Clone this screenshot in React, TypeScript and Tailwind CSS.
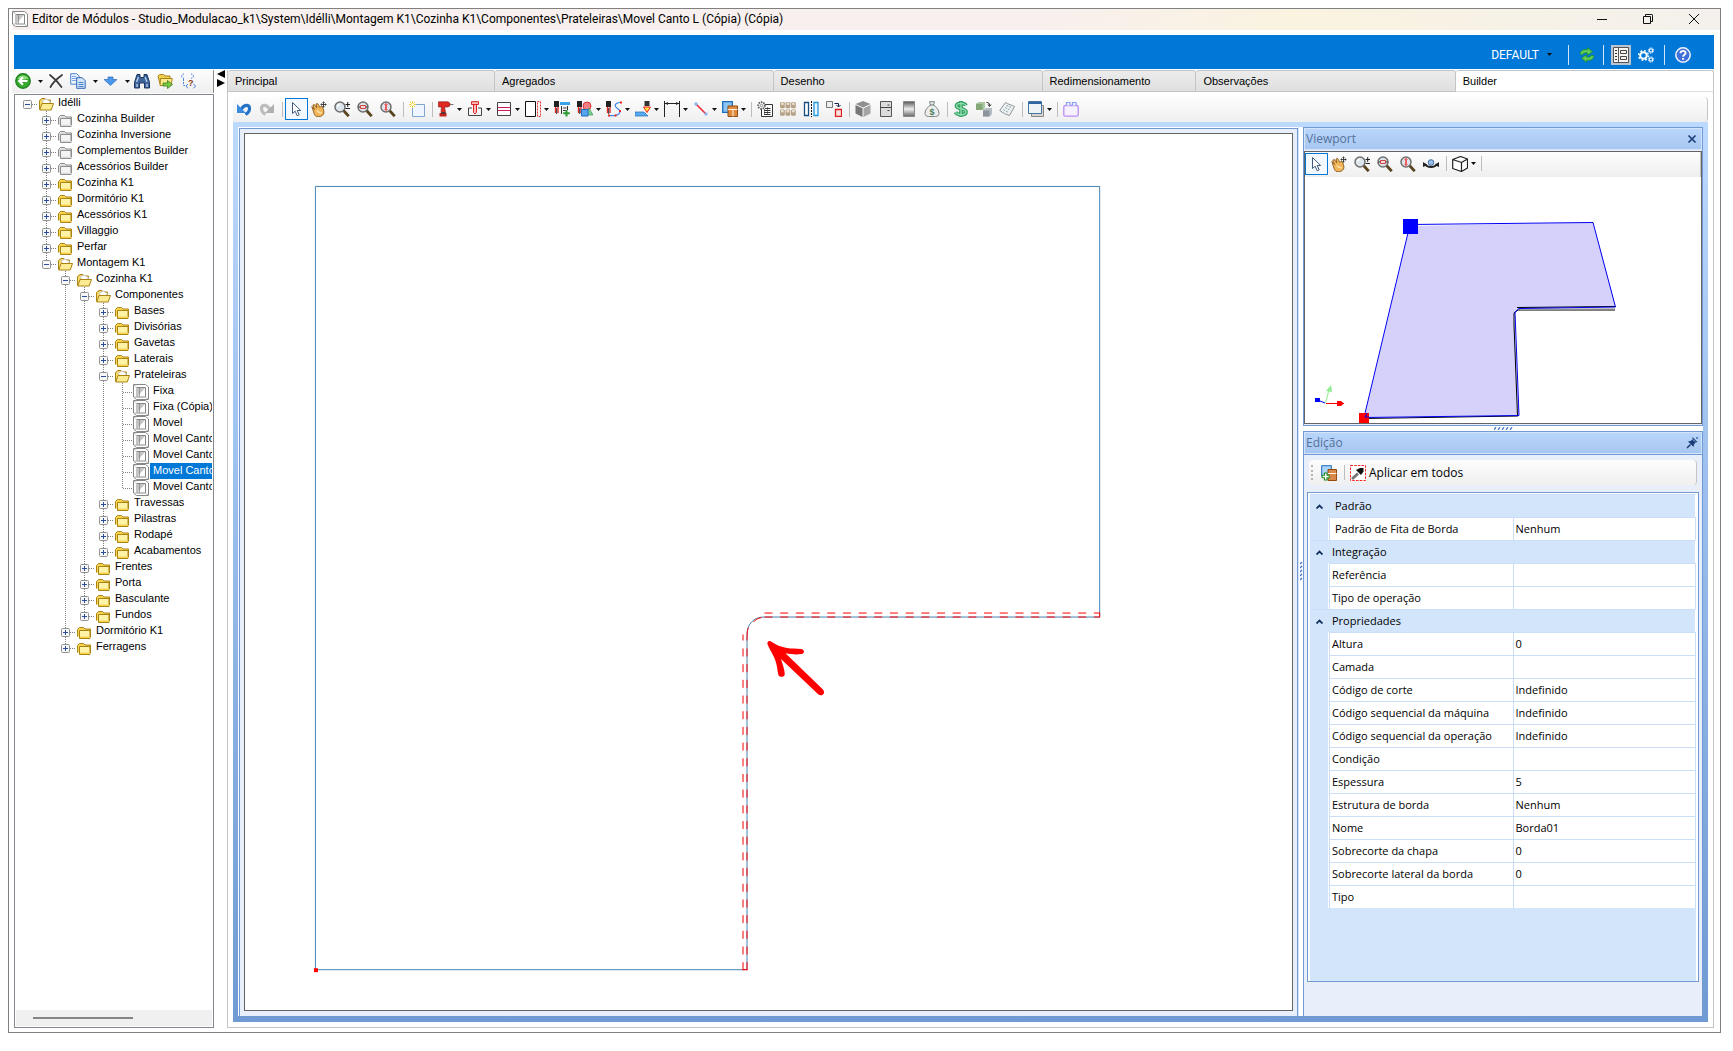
import React from "react";

type IconProps = { children: React.ReactNode; size?: string; box?: string };

function Icon({ children, size = "size-4", box = "0 0 16 16" }: IconProps) {
  return (
    <svg viewBox={box} className={`${size} shrink-0`} fill="none" aria-hidden="true">
      {children}
    </svg>
  );
}

/* ---------- toolbar icons ---------- */

const Undo = () => (
  <Icon>
    <path d="M5 8.500C8 3.500 13 3 13.500 7c.3 2.800-1.500 5-4 6.500" stroke="#2672c8" strokeWidth="3.200" />
    <path d="M1 3v9h9z" fill="#3a8be0" />
  </Icon>
);
const Redo = () => (
  <Icon>
    <path d="M11 8.500C8 3.500 3 3 2.500 7c-.3 2.800 1.500 5 4 6.500" stroke="#bdbdbd" strokeWidth="3.200" />
    <path d="M15 3v9H6z" fill="#b0b0b0" />
  </Icon>
);
const Cursor = () => (
  <Icon>
    <path d="M4.500 1.500v11l2.700-2.300 2 4.600 2-.9-2-4.400h3.500z" fill="#fff" stroke="#44597a" />
  </Icon>
);
const Hand = () => (
  <Icon>
    <path d="M.8 5.500 3.500 8.500 1.800 4.200 3.300 3.500l2.500 3.300L5 3l1.700-.4L9 6.500l1-1.300 1.700.8L13 11c0 3-2.500 4.700-5.500 4.700-2.500 0-3.800-1.200-4.300-3z" fill="#f1b65a" stroke="#8a5a1c" strokeWidth=".9" />
    <path d="M6 9.500c1.500 2 3 2.500 4.500 2" stroke="#fbe2ae" strokeWidth="1.500" />
    <path d="M12.500.5v6M9.500 3.500h6M11.500 1.500h2M11.500 5.500h2M10.500 2.500v2M14.500 2.500v2" stroke="#333" strokeWidth=".9" />
  </Icon>
);
function Lens({ children }: { children?: React.ReactNode }) {
  return (
    <Icon>
      <path d="m9.500 9.500 5.200 5.700" stroke="#5a4420" strokeWidth="2.800" />
      <circle cx="6" cy="6" r="5" fill="#dde5ec" stroke="#6e6e6e" strokeWidth="1.500" />
      {children}
    </Icon>
  );
}
const Zoom = () => (
  <Lens>
    <path d="M11.500 3.500h4.500M13.700 1v5M11.500 7.500h4.500" stroke="#222" />
    <path d="M3.500 5.500a2.500 2.500 0 0 1 2-2" stroke="#fff" strokeWidth="1.500" />
  </Lens>
);
const ZoomWindow = () => (
  <Lens>
    <path d="M3.500 4.500h5v3h-5z" stroke="#c44" fill="#f4dada" />
    <path d="M1.500 6h1.500M9 6h1.500" stroke="#222" />
  </Lens>
);
const ZoomFit = () => (
  <Lens>
    <path d="M6 3v6" stroke="#e33" strokeWidth="1.500" />
    <path d="M4 4 6 1.800 8 4zM4 8l2 2.200L8 8z" fill="#ef5a5a" />
  </Lens>
);
const NewSheet = () => (
  <Icon>
    <path d="M3.500 3.500h12v12h-12z" fill="#eef6ff" stroke="#7fa6cf" />
    <path d="M3.500 0v7M0 3.500h7M1 1l5 5M6 1 1 6" stroke="#f2cf3a" />
    <circle cx="3.500" cy="3.500" r="1.300" fill="#fff" />
  </Icon>
);
const Drill = () => (
  <Icon>
    <path d="M.5.800h9.500L12 2.300v2.400L10 6H6.500l1 5.500H3L3.500 6h-3z" fill="#e02a20" stroke="#7c1511" strokeWidth=".6" />
    <path d="M12 3.500h3.500" stroke="#777" />
    <path d="M1.500 12h7v3.500h-7z" fill="#c4241c" />
    <path d="M3.500 12h4" stroke="#333" strokeWidth="1.500" />
  </Icon>
);
const Dowel = () => (
  <Icon>
    <path d="M5 7H1.500v7.500h13V7H11" stroke="#444" />
    <path d="M6.500 3.500h3v8L8 13l-1.500-1.500zM4.500 .7h7v2.800h-7z" fill="#fbb" stroke="#dc2222" />
  </Icon>
);
const Shelf = () => (
  <Icon>
    <path d="M1.500 1.500h13v13h-13z" fill="#fff" stroke="#444" />
    <path d="M2 6.500h12M2 9.500h12" stroke="#d6185c" />
  </Icon>
);
const EdgeBand = () => (
  <Icon>
    <path d="M.5.500h10v15H.5z" fill="#fff" stroke="#111" />
    <path d="M12.500.5h3v15h-3z" stroke="#e33" strokeDasharray="2 1" />
  </Icon>
);
const Mill = () => (
  <>
    <path d="M0 0h5v6H0z" fill="#222" />
    <path d="M1.500 6v6M4 6v6" stroke="#e22" strokeWidth="1.300" />
    <path d="M2.700 7v6" stroke="#333" />
  </>
);
const MillAdd = () => (
  <Icon>
    <Mill />
    <path d="M6 1h10v3H6z" fill="#3aa3e8" />
    <path d="M7.500 5v8M13.500 5v4M9 7h3.500M9 9.500h3" stroke="#333" />
    <path d="M12.500 9v6.500M9.200 12.300h6.600" stroke="#2a9b2f" strokeWidth="2" />
  </Icon>
);
const MillShape = () => (
  <Icon>
    <Mill />
    <circle cx="10" cy="5" r="4" fill="#f07f86" stroke="#d33" />
    <path d="m12 7 4 7H9z" fill="#7fcf98" stroke="#3a9b57" strokeWidth=".7" />
    <path d="M4.500 8.500H11V15H4.500z" fill="#58a6ef" stroke="#1f6cc0" />
  </Icon>
);
const MillPath = () => (
  <Icon>
    <Mill />
    <path d="M14.500 1.500c-4 0-6 2-5 4s4.500 3 4.500 5-3 4-5 4-5 .5-6 0" stroke="#3a86e6" strokeWidth="1.200" />
    <path d="M14 .5h2v2h-2zM13 9h2v2h-2zM2 13.500h2v2H2zM8.500 13.500h2v2h-2z" fill="#e22" />
  </Icon>
);
const Chamfer = () => (
  <Icon>
    <path d="M9.500 0h5v5h-5z" fill="#333" />
    <path d="M8.500 6h7L12 11.500z" fill="#ffe23d" stroke="#e22" />
    <path d="M0 11h9l4 4H0z" fill="#58a9ee" stroke="#1f6cc0" strokeWidth=".7" />
  </Icon>
);
const Dimension = () => (
  <Icon>
    <path d="M.5 0v16M15.500 0v16M1 2.500h14" stroke="#222" />
    <path d="M1 2.500 4 1v3zM15 2.500 12 1v3z" fill="#222" />
  </Icon>
);
const LineTool = () => (
  <Icon>
    <path d="m3 3 10 10" stroke="#e23" strokeWidth="1.500" />
    <circle cx="3" cy="3" r="1.700" fill="#8ab8ee" />
    <circle cx="13" cy="13" r="1.700" fill="#8ab8ee" />
  </Icon>
);
const Blocks = () => (
  <Icon>
    <path d="M.7.700h9.600v10.600H.7z" fill="#8cc4f5" stroke="#1c6bb8" strokeWidth="1.300" />
    <path d="M6 5h9.500v10.500H6z" fill="#e08a3c" stroke="#8f4b12" />
    <path d="M6 8.500h9.500M11 8.500v7" stroke="#fff2e0" />
  </Icon>
);
const GearList = () => (
  <Icon>
    <path d="M5.500 3.500h10v12h-11V8" fill="#fff" stroke="#333" />
    <path d="M8 7.500h5.500M7 9.500h6.500M7 11.500h6.500M7 13.500h6.500" stroke="#333" />
    <path d="M7.500 6v8M10.500 6v8" stroke="#888" strokeDasharray="1 1" />
    <circle cx="4.500" cy="4.500" r="3.400" fill="#eee" stroke="#555" strokeDasharray="1.500 1" strokeWidth="1.600" />
    <circle cx="4.500" cy="4.500" r="1.300" fill="#fff" stroke="#777" strokeWidth=".7" />
  </Icon>
);
const Boxes = () => (
  <Icon>
    {[1, 8.5].map((y) =>
      [0, 5.5, 11].map((x) => (
        <g key={`${x}-${y}`}>
          <rect x={x} y={y} width="4.800" height="6.300" rx="1.200" fill="#b6a286" />
          <rect x={x + 1} y={y + 0.5} width="2.800" height="2.500" rx="1" fill="#ece2d0" />
        </g>
      )),
    )}
  </Icon>
);
const Mirror = () => (
  <Icon>
    <path d="M1.500 1.500h4v13h-4z" fill="#fff" stroke="#1b4f80" strokeWidth="1.300" />
    <path d="M11 1.500h4v13h-4z" fill="#e4f4ff" stroke="#2499dc" strokeWidth="1.300" />
    <path d="M8.500 0v16" stroke="#111" strokeDasharray="2 1" />
  </Icon>
);
const Replace = () => (
  <Icon>
    <path d="M.5.500h6v6h-6z" fill="#eee" stroke="#777" />
    <path d="M9.500 8.500h6v7h-6z" fill="#fcdede" stroke="#d22" strokeWidth="1.300" />
    <path d="M8.500 2.500h4v3M10.500 4l2 2 2-2" stroke="#124" />
  </Icon>
);
const Cube = () => (
  <Icon>
    <path d="m8 0 7.500 3L8 6.500.5 3z" fill="#8f8f8f" />
    <path d="M.5 4 7.500 7.200V16L.5 12.500z" fill="#777" />
    <path d="M15.500 4 8.500 7.200V16l7-3.500z" fill="#a5a5a5" />
  </Icon>
);
const Fridge = () => (
  <Icon>
    <path d="M2.500.500h11v15h-11z" fill="#dcdcdc" stroke="#555" />
    <path d="M2.500 6.500h11M9.500 4h2M9.500 9.500h2" stroke="#444" />
  </Icon>
);
const Panel = () => (
  <Icon>
    <defs>
      <linearGradient id="steel" x1="0" y1="0" x2="0" y2="1">
        <stop offset="0" stopColor="#555" />
        <stop offset=".5" stopColor="#eee" />
        <stop offset="1" stopColor="#666" />
      </linearGradient>
    </defs>
    <path d="M2.500.500h11v15h-11z" fill="url(#steel)" stroke="#888" />
  </Icon>
);
const MoneyBag = () => (
  <Icon>
    <path d="M5.500.700h5L9.500 4c3 2 5.500 5 5.500 8.500 0 2-1.500 3-3.500 3h-7c-2 0-3.500-1-3.500-3C1 9 3.500 6 6.500 4z" fill="#eceeec" stroke="#7c8680" />
    <path d="M6 4h4" stroke="#6b756e" />
    <text x="8" y="13.500" fontSize="9" fontWeight="700" textAnchor="middle" fill="#4d7a5c" fontFamily="Liberation Sans, sans-serif">$</text>
  </Icon>
);
const Dollar = () => (
  <Icon>
    <path d="M13 4.500C12 2.500 10 2.300 8 2.300c-2.500 0-4.500.9-4.500 2.700C3.500 8.500 13 7 13 10.700c0 2-2.200 3-5 3-2.500 0-4.500-.7-5.500-2.500M8 0v16" stroke="#35a063" strokeWidth="3.800" />
    <path d="M13 4.500C12 2.500 10 2.300 8 2.300c-2.500 0-4.500.9-4.500 2.700C3.500 8.500 13 7 13 10.700c0 2-2.200 3-5 3-2.500 0-4.500-.7-5.500-2.500M8 1v14" stroke="#8ee0ac" strokeWidth="1.300" />
  </Icon>
);
const CubeSwap = () => (
  <Icon>
    <path d="M0 2.500 3 1h6v6L7 9H0z" fill="#a9c7a0" />
    <path d="M0 3h6.500v6H0z" fill="#84a87a" />
    <path d="m7 9 3-2h6v6l-2 2.500H7z" fill="#b4bcc4" />
    <path d="M7 9.500h6.500v6H7z" fill="#8b949c" />
    <path d="M10.500 1.500c2 0 3 .5 3 3M12 3.500l1.500 2 1.500-2" stroke="#222" />
  </Icon>
);
const Notes = () => (
  <Icon>
    <path d="M6.500 1.500c3 2 6 2.500 9 4L10.500 14.500C7 13.500 4 12 .7 9.500z" fill="#eef1f2" stroke="#8b9398" />
    <path d="m7.500 4.500 5.500 2.500M6 6.500l5.500 2.700M4.500 8.700 9.500 11.500" stroke="#8fa3a8" strokeDasharray="2 1" />
  </Icon>
);
const Windows = () => (
  <Icon>
    <path d="M3.500 4.500h12v11h-12z" fill="#d4d4d0" stroke="#8a8a84" />
    <path d="M.5.500h13v12H.5z" fill="#eef3f6" stroke="#47749c" />
    <path d="M.5 2h13" stroke="#2f66a3" strokeWidth="2" />
  </Icon>
);
const Plugin = () => (
  <Icon>
    <rect x=".8" y="4.500" width="14.400" height="10.700" rx="1.500" fill="#f7f1ff" stroke="#b98df5" strokeWidth="1.300" />
    <path d="M3.500 4.500v-3h3.500v3M9.500 4.500v-3H13v3" fill="#f0f3ff" stroke="#8aa2f5" strokeWidth="1.200" />
  </Icon>
);
const Orbit = () => (
  <Icon>
    <path d="M2 8c2 4 10 4 12 0" stroke="#222" strokeWidth="1.800" />
    <path d="M0 6v5l4.500-2zM16 6v5l-4.500-2z" fill="#222" />
    <circle cx="8" cy="6.500" r="2.800" fill="#9dc0ea" stroke="#3f6ea5" />
  </Icon>
);
const WireCube = () => (
  <Icon>
    <path d="M8.500.500 15.500 3v9l-6 3.500L.7 12.500V3.500zM.7 3.500 9.500 6.500l6-3.500M9.500 6.500v9" fill="#fff" stroke="#222" strokeWidth="1.200" strokeLinejoin="round" />
  </Icon>
);

const Back = () => (
  <Icon>
    <circle cx="8" cy="8" r="7.300" fill="#36a92f" stroke="#1d7d1c" strokeWidth="1.200" />
    <path d="M2.500 5.500a6.500 6.500 0 0 1 11 0C10 7 6 7 2.500 5.500z" fill="#8fdc7c" />
    <path d="M12.500 8H4.500M8 4.200 4.200 8 8 11.800" stroke="#fff" strokeWidth="2.200" />
  </Icon>
);
const Close = () => (
  <Icon>
    <path d="M3 2c4 3 8 7 11.500 12M15 2C11 5 6 9 3.500 14" stroke="#3a3a3a" strokeWidth="1.700" strokeLinecap="round" />
  </Icon>
);
const Copy = () => (
  <Icon>
    <path d="M.7 .7h6l2.500 2.500v8H.7z" fill="#e9f2fd" stroke="#4f83c8" />
    <path d="M2 3.500h4M2 5.500h5M2 7.500h4" stroke="#7aa6dd" />
    <path d="M6.700 4.700h5.500l3 3v7.600H6.700z" fill="#d4e5fa" stroke="#2f66b5" />
    <path d="M8.500 9.500h5M8.500 11.500h5M8.500 13.500h5" stroke="#4f83c8" />
  </Icon>
);
const ArrowDown = () => (
  <Icon>
    <path d="M6 4h5v2.500h4L8.500 12.500 2 6.500h4z" fill="#4b97ea" stroke="#2f6fc0" strokeWidth=".7" />
  </Icon>
);
const Binoculars = () => (
  <Icon>
    <path d="M3 1.500h3v3h4v-3h3l2.500 8v5.500h-5v-5h-5v5h-5V9.500z" fill="#3d6398" stroke="#1c3763" />
    <path d="M2.500 9 4.500 4M11 4l2 5M3 11v3M13 11v3" stroke="#bcd4f0" strokeWidth="1.300" />
  </Icon>
);
const FolderGo = () => (
  <Icon>
    <path d="M1 3 2.500 1.500h4L8 3h5v8H3z" fill="#f0cf4e" stroke="#a9831c" />
    <path d="M3.500 5.500h11.800L14 12.500H3z" fill="#ffe98a" stroke="#a9831c" />
    <path d="M6 10h4.500V7.500l5 4-5 4V13H6z" fill="#7ac943" stroke="#3d7d1d" strokeWidth=".8" />
  </Icon>
);
const TreeQuery = () => (
  <Icon>
    <path d="m4 .7-3 2.500 3 2.500M11 .7l3 2.500-3 2.500M3.500 6v6.500h3" stroke="#4a7fe0" strokeDasharray="2 1" />
    <path d="m8 11-2 2 2 2.300M13.500 11l2 2-2 2.300" stroke="#4a7fe0" />
    <text x="10.800" y="12.500" fontSize="9" fontWeight="700" textAnchor="middle" fill="#8a3a12" fontFamily="Liberation Sans, sans-serif">?</text>
  </Icon>
);

const Refresh = () => (
  <Icon>
    <path d="M1 7c.5-3.500 4-5 7.500-4.200V.7l5 4-5 3.500V6C6 5.500 4.200 6 3.500 8z" fill="#5ecb52" stroke="#1f8a2b" strokeWidth=".7" />
    <path d="M15 9c-.5 3.500-4 5-7.500 4.200v2.100l-5-4 5-3.500V10c2.500.5 4.300 0 5-2z" fill="#5ecb52" stroke="#1f8a2b" strokeWidth=".7" />
  </Icon>
);
const Form = () => (
  <Icon>
    <path d="M.5.500h15v15H.5z" fill="#f7f5ef" stroke="#555" />
    <path d="M5.500 1v14" stroke="#555" />
    <path d="M2 3.500h2M2 6.500h2M2 9.500h2M2 12.500h2" stroke="#333" />
    <path d="M7.500 3.500h6v3h-6zM7.500 9.500h6v3h-6z" stroke="#444" />
  </Icon>
);
const Gears = () => (
  <Icon>
    <circle cx="5.500" cy="8.500" r="3.300" stroke="#fff" strokeWidth="2" />
    <circle cx="5.500" cy="8.500" r="4.900" stroke="#fff" strokeWidth="1.400" strokeDasharray="1.900 1.950" />
    <circle cx="13" cy="3.500" r="1.700" stroke="#e8f2ff" strokeWidth="1.300" />
    <circle cx="13" cy="3.500" r="2.700" stroke="#e8f2ff" strokeDasharray="1.100 1.020" />
    <circle cx="13" cy="12.500" r="1.700" stroke="#e8f2ff" strokeWidth="1.300" />
    <circle cx="13" cy="12.500" r="2.700" stroke="#e8f2ff" strokeDasharray="1.100 1.020" />
  </Icon>
);
const Help = () => (
  <Icon>
    <circle cx="8" cy="8" r="7.200" fill="#3f6fd8" stroke="#eef4ff" strokeWidth="1.500" />
    <path d="M5.500 6.200C5.500 3 10.800 3.200 10.600 6c-.1 1.700-2.500 1.800-2.500 3.700M8.100 11v1.800" stroke="#fff" strokeWidth="1.900" />
  </Icon>
);
const Module = () => (
  <Icon>
    <path d="M.5.500h12l3 2.500v12.500h-12L.5 13z" fill="#fff" stroke="#868686" />
    <path d="M4 3.500h8.500v9.500H4z" fill="#fff" stroke="#868686" />
    <path d="M1 1l3 2.500M1 13l3 0M12.500 13l2.500 2" stroke="#a8a8a8" strokeWidth=".8" />
    <path d="M4.500 4H12L4.500 12.500z" fill="#c6c6c6" />
    <path d="M6.500 4v8.500" stroke="#868686" strokeWidth=".8" />
  </Icon>
);
const Folder = ({ tone }: { tone: "gray" | "yellow" }) => {
  const c = tone === "gray" ? ["#dedede", "#f4f4f4", "#8c8c8c"] : ["#f6d552", "#fff3a8", "#ab8311"];
  return (
    <Icon>
      <path d="M1.500 12.500V5.500L3.500 3.500h4L9 5h5.500v8" fill={c[0]} stroke={c[2]} />
      <path d="M3.500 6.500h10.500v8H3.500z" fill={c[1]} stroke={c[2]} />
      <path d="M4 12.500h10v1.500H4z" fill={c[0]} />
    </Icon>
  );
};
const FolderOpen = () => (
  <Icon>
    <path d="M1.500 13.500v-9L4 2.500h3L8.500 4h4v3" fill="#f6d96a" stroke="#ab8311" />
    <path d="m4 5 4-2 5 3-6 3z" fill="#fff" stroke="#b9b9b9" strokeWidth=".7" />
    <path d="M4 7.500h11.500l-2.300 6.500H1.800z" fill="#fdeb94" stroke="#ab8311" />
  </Icon>
);
const PresetAdd = () => (
  <Icon>
    <path d="M.7.700h9.600v10.600H.7z" fill="#a9d4f8" stroke="#1c6bb8" />
    <path d="M7 4.500h8.500v11H7z" fill="#d98a4a" stroke="#8f4b12" />
    <path d="M7 8.500h8.500" stroke="#fff2e0" />
    <path d="M4.700 7.500v8M.7 11.500h8" stroke="#1e8a22" strokeWidth="3.600" />
    <path d="M4.700 8.500v6M1.700 11.500h6" stroke="#fff" strokeWidth="1.500" />
  </Icon>
);
const Eyedrop = () => (
  <Icon>
    <path d="M.5.500h15v15H.5z" fill="#fff" stroke="#f22" strokeDasharray="2.500 1.200" />
    <path d="m2 14 6-5.500" stroke="#777" strokeWidth="3" />
    <path d="m6 5 5 5 2.500-3.500V3H10z" fill="#111" />
  </Icon>
);

/* ---------- toolbar pieces ---------- */

function Caret() {
  return (
    <svg viewBox="0 0 5 3" className="h-[3px] w-[5px] shrink-0" aria-hidden="true">
      <path d="M0 0h5L2.500 3z" fill="#111" />
    </svg>
  );
}

function Tool({ label, icon, caret, active }: { label: string; icon: React.ReactNode; caret?: "tight" | "wide"; active?: boolean }) {
  const width = caret === "wide" ? "w-8" : caret === "tight" ? "w-[29px]" : "w-[23px]";
  return (
    <button
      type="button"
      aria-label={label}
      aria-pressed={active}
      className={`flex h-[22px] shrink-0 items-center ${width} ${caret === "wide" ? "gap-[7px]" : "gap-[3px]"} ${active ? "border border-[#0078d7] bg-[#f3f9ff] pl-[2px]" : "pl-[3px]"}`}
    >
      {icon}
      {caret && <Caret />}
    </button>
  );
}

const Sep = () => (
  <span className="flex w-[6px] shrink-0 justify-center">
    <span className="h-[15px] w-px bg-[#bdbdbd]" />
  </span>
);

const bar = "flex items-center bg-linear-to-b from-[#fdfdfd] to-[#efefef]";

function MainToolbar() {
  return (
    <div role="toolbar" aria-label="Ferramentas" className={`${bar} h-[25px] overflow-hidden rounded-r border-r border-[#c4c4c4] pb-px`}>
      <Tool label="Desfazer" icon={<Undo />} />
      <Tool label="Refazer" icon={<Redo />} />
      <Sep />
      <Tool label="Selecionar" icon={<Cursor />} active />
      <Tool label="Mover vista" icon={<Hand />} />
      <Tool label="Zoom" icon={<Zoom />} />
      <Tool label="Zoom janela" icon={<ZoomWindow />} />
      <Tool label="Zoom extensão" icon={<ZoomFit />} />
      <Sep />
      <Tool label="Novo" icon={<NewSheet />} />
      <Sep />
      <Tool label="Furação" icon={<Drill />} caret="tight" />
      <Tool label="Cavilha" icon={<Dowel />} caret="tight" />
      <Tool label="Rasgo" icon={<Shelf />} caret="tight" />
      <Tool label="Borda" icon={<EdgeBand />} caret="tight" />
      <Tool label="Adicionar fresa" icon={<MillAdd />} />
      <Tool label="Fresar forma" icon={<MillShape />} caret="tight" />
      <Tool label="Fresar caminho" icon={<MillPath />} caret="tight" />
      <Tool label="Chanfro" icon={<Chamfer />} caret="tight" />
      <Tool label="Cota" icon={<Dimension />} caret="tight" />
      <Tool label="Linha" icon={<LineTool />} caret="tight" />
      <Tool label="Blocos" icon={<Blocks />} caret="tight" />
      <Sep />
      <Tool label="Configurar lista" icon={<GearList />} />
      <Tool label="Agregados" icon={<Boxes />} />
      <Tool label="Espelhar" icon={<Mirror />} />
      <Tool label="Substituir" icon={<Replace />} />
      <Sep />
      <Tool label="Módulo" icon={<Cube />} />
      <Tool label="Refrigerador" icon={<Fridge />} />
      <Tool label="Chapa" icon={<Panel />} />
      <Tool label="Custo" icon={<MoneyBag />} />
      <Sep />
      <Tool label="Preço" icon={<Dollar />} />
      <Tool label="Trocar módulo" icon={<CubeSwap />} />
      <Tool label="Anotações" icon={<Notes />} />
      <Sep />
      <Tool label="Janelas" icon={<Windows />} caret="tight" />
      <Sep />
      <Tool label="Extensões" icon={<Plugin />} />
    </div>
  );
}

/* ---------- tree ---------- */

type Kind = "gray" | "yellow" | "open" | "leaf";
type Node = { name: string; kind: Kind; children?: Node[]; selected?: boolean };
const f = (name: string): Node => ({ name, kind: "yellow" });
const g = (name: string): Node => ({ name, kind: "gray" });
const leaf = (name: string, selected = false): Node => ({ name, kind: "leaf", selected });
const open = (name: string, children: Node[]): Node => ({ name, kind: "open", children });

const root: Node = open("Idélli", [
  g("Cozinha Builder"),
  g("Cozinha Inversione"),
  g("Complementos Builder"),
  g("Acessórios Builder"),
  f("Cozinha K1"),
  f("Dormitório K1"),
  f("Acessórios K1"),
  f("Villaggio"),
  f("Perfar"),
  open("Montagem K1", [
    open("Cozinha K1", [
      open("Componentes", [
        f("Bases"),
        f("Divisórias"),
        f("Gavetas"),
        f("Laterais"),
        open("Prateleiras", [
          leaf("Fixa"),
          leaf("Fixa (Cópia)"),
          leaf("Movel"),
          leaf("Movel Canto"),
          leaf("Movel Canto"),
          leaf("Movel Canto", true),
          leaf("Movel Canto"),
        ]),
        f("Travessas"),
        f("Pilastras"),
        f("Rodapé"),
        f("Acabamentos"),
      ]),
      f("Frentes"),
      f("Porta"),
      f("Basculante"),
      f("Fundos"),
    ]),
    f("Dormitório K1"),
    f("Ferragens"),
  ]),
]);

type Row = { node: Node; depth: number; last: boolean; guides: boolean[] };
function flatten(node: Node, depth: number, last: boolean, guides: boolean[], out: Row[]): Row[] {
  out.push({ node, depth, last, guides });
  node.children?.forEach((child, i, all) => {
    flatten(child, depth + 1, i === all.length - 1, [...guides, !last], out);
  });
  return out;
}
const rows = flatten(root, 0, true, [], []);

const dots = { stroke: "#808080", strokeDasharray: "1 1" };

function Branch({ row }: { row: Row }) {
  const { node, depth, last } = row;
  return (
    <svg viewBox="0 0 19 16" className="h-4 w-[19px]" fill="none" aria-hidden="true">
      {depth > 0 && <path d={last ? "M9.500 0v9" : "M9.500 0v16"} {...dots} />}
      <path d="M10 9.500h9" {...dots} />
      {node.kind !== "leaf" && (
        <>
          <rect x="5.500" y="5.500" width="8" height="8" rx="1" fill="#f7f7f7" stroke="#919191" />
          <path d={node.kind === "open" ? "M7 9.500h5" : "M7 9.500h5M9.500 7v5"} stroke="#2b4f9e" />
        </>
      )}
    </svg>
  );
}

function TreeRow({ row }: { row: Row }) {
  const { node, guides, depth } = row;
  return (
    <li role="treeitem" aria-level={depth + 1} aria-selected={!!node.selected} className="flex h-4 items-center">
      {guides.map((on, i) => (
        <svg key={i} viewBox="0 0 19 16" className="h-4 w-[19px] shrink-0" aria-hidden="true">
          {on && <path d="M9.500 0v16" {...dots} />}
        </svg>
      ))}
      {node.kind === "leaf" ? (
        <span className="shrink-0">
          <Branch row={row} />
        </span>
      ) : (
        <button type="button" aria-label={`${node.kind === "open" ? "Recolher" : "Expandir"} ${node.name}`} className="shrink-0">
          <Branch row={row} />
        </button>
      )}
      <span className="flex w-[18px] shrink-0 justify-center pt-[2px]">
        {node.kind === "leaf" ? <Module /> : node.kind === "open" ? <FolderOpen /> : <Folder tone={node.kind} />}
      </span>
      <span className={`h-4 grow px-[3px] leading-[14px] whitespace-nowrap ${node.selected ? "bg-[#0078d7] text-white" : ""}`}>{node.name}</span>
    </li>
  );
}

function Sidebar() {
  return (
    <aside className="flex w-[202px] shrink-0 flex-col">
      <div role="toolbar" aria-label="Árvore" className={`${bar} h-[23px] border-r border-[#8a8a8a] pb-px`}>
        <Tool label="Voltar" icon={<Back />} caret="wide" />
        <Tool label="Excluir" icon={<Close />} />
        <Tool label="Copiar" icon={<Copy />} caret="wide" />
        <Tool label="Mover para baixo" icon={<ArrowDown />} caret="wide" />
        <Tool label="Procurar" icon={<Binoculars />} />
        <Tool label="Ir para pasta" icon={<FolderGo />} />
        <Tool label="Consultar" icon={<TreeQuery />} />
      </div>
      <div className="mt-px ml-[2px] flex grow flex-col border border-[#828790] bg-white px-px pb-px font-['Liberation_Sans',sans-serif] text-[11px] text-black">
        <ul role="tree" aria-label="Módulos" className="grow overflow-hidden pl-[2px]">
          {rows.map((row, i) => (
            <TreeRow key={i} row={row} />
          ))}
        </ul>
        <div className="flex h-4 items-center bg-[#f0f0f0] px-[17px]">
          <div className="h-[2px] w-[100px] bg-[#858585]" />
        </div>
      </div>
    </aside>
  );
}

/* ---------- drawings ---------- */

function Drawing() {
  return (
    <svg viewBox="245 134 1048 877" className="w-full" fill="none" role="img" aria-label="Desenho da prateleira em L">
      <path d="M747.500 970.500H315.500V186.500H1100.500V617.500H764C754 617.500 747.500 625 747.500 635z" stroke="#4682b4" />
      <path d="M765 613.500H1100.500" stroke="#f00" strokeDasharray="8 7.700" />
      <path d="M765 617.500H1100" stroke="#f00" strokeDasharray="8 7.700" />
      <path d="M1100.500 613v5" stroke="#f00" />
      <path d="M762 618c-4 1-6 2-8 4.500M749 628c-1 2-1.500 4-1.500 13" stroke="#f00" />
      <path d="M743.500 635v6M743.500 649V971" stroke="#f00" strokeDasharray="8 7.700" />
      <path d="M747.500 649V971" stroke="#f00" strokeDasharray="8 7.700" />
      <path d="M743 970.500h5" stroke="#f00" />
      <path d="M314 969h4v4h-4z" fill="#f00" />
      <path
        d="M768.300 645.500C767 642.500 769 640.500 771.500 642c5 3.500 10 5.500 16 6.500 5 .8 9 .5 14 1 4 .5 4 4.500.5 5-5 .8-10 .3-16-.8L823 689.500c4 4 0 8-4 5.500L781.500 659.500c1.500 5 3.500 10 3.800 15 .1 3.500-5.800 4-6.600.3-1-5.300-1.200-9.800-3.200-14.800-2-5-5-9.500-7.200-14.500z"
        fill="#f00"
      />
    </svg>
  );
}

function Preview() {
  return (
    <svg viewBox="1305 177 396 246" className="w-full" fill="none" role="img" aria-label="Vista 3D">
      <path d="M1410 226 1593 222.500 1615.500 306 1518 309 1514.500 313 1519 415 1364 417.500z" fill="#d5d1fb" />
      <path d="M1364 418.500 1518 416M1517.500 416 1514 325V313L1518 310H1615" stroke="#000" />
      <path d="M1517 307.500 1615 306.500" stroke="#000" />
      <path d="M1520 309 1615 308.500" stroke="#bbb" />
      <path d="M1410 224.500 1593 222.500 1615.500 307 1519 308.500 1515 312 1519 415.500 1364 417.500z" stroke="#0000f5" />
      <path d="M1403 219h15v15h-15z" fill="#00f" />
      <path d="M1359 413h10v10h-10z" fill="#f00" />
      <path d="M1367 413 1365 417H1369" stroke="#00f" />
      <path d="M1326 403.500h18" stroke="#f00" />
      <path d="M1337 401h4l3 2.500-3 2.500h-4z" fill="#f00" />
      <path d="m1325.500 403 4-15" stroke="#90ee90" />
      <path d="m1326 391 5-6 1 7z" fill="#90ee90" />
      <path d="m1325 403-5-2" stroke="#00f" />
      <path d="M1315 398h5v4h-5z" fill="#00f" />
    </svg>
  );
}

/* ---------- docked panels ---------- */

function PanelTitle({ text, action, icon }: { text: string; action: string; icon: React.ReactNode }) {
  return (
    <div className="flex h-[22px] items-center justify-between border border-[#d3e4fb] bg-linear-to-b from-[#b8d5fb] to-[#a8c7f0] pr-px">
      <h2 className="pl-px text-xs text-[#54729c]">{text}</h2>
      <button type="button" aria-label={action}>
        {icon}
      </button>
    </div>
  );
}

function Grip({ vertical }: { vertical?: boolean }) {
  return (
    <svg viewBox={vertical ? "0 0 3 19" : "0 0 19 3"} className={vertical ? "h-[19px] w-[3px]" : "h-[3px] w-[19px]"} aria-hidden="true">
      {[0, 4, 8, 12, 16].map((p) => (
        <path key={p} d={vertical ? `M0 ${p + 2}L2 ${p}` : `M${p} 3L${p + 2} 0`} stroke="#3f74c9" strokeWidth="1.300" />
      ))}
    </svg>
  );
}

type Group = { title: string; inset?: boolean; items: [string, string][] };
const groups: Group[] = [
  { title: "Padrão", inset: true, items: [["Padrão de Fita de Borda", "Nenhum"]] },
  { title: "Integração", items: [["Referência", ""], ["Tipo de operação", ""]] },
  {
    title: "Propriedades",
    items: [
      ["Altura", "0"],
      ["Camada", ""],
      ["Código de corte", "Indefinido"],
      ["Código sequencial da máquina", "Indefinido"],
      ["Código sequencial da operação", "Indefinido"],
      ["Condição", ""],
      ["Espessura", "5"],
      ["Estrutura de borda", "Nenhum"],
      ["Nome", "Borda01"],
      ["Sobrecorte da chapa", "0"],
      ["Sobrecorte lateral da borda", "0"],
      ["Tipo", ""],
    ],
  },
];

function PropertyGrid() {
  return (
    <table className="w-full table-fixed border-separate border-spacing-0 text-[11px] leading-4 text-black">
      <colgroup>
        <col className="w-[19px]" />
        <col />
        <col />
      </colgroup>
      {groups.map((group) => (
        <tbody key={group.title}>
          <tr className="h-[23px]">
            <th className="border-t border-t-[#cbdef7] p-0">
              <button type="button" aria-label={`Recolher ${group.title}`} className="flex h-[22px] w-full items-center justify-center">
                <svg viewBox="0 0 7 5" className="h-[5px] w-[7px]" fill="none" aria-hidden="true">
                  <path d="M.5 4.500 3.500 1.500l3 3" stroke="#12305f" strokeWidth="1.800" />
                </svg>
              </button>
            </th>
            <th colSpan={2} scope="colgroup" className={`border-t border-r border-t-[#cbdef7] border-r-white p-0 text-left font-normal ${group.inset ? "pl-[6px]" : "pl-[3px]"}`}>
              {group.title}
            </th>
          </tr>
          {group.items.map(([name, value]) => (
            <tr key={name} className="h-[23px]">
              <td className="border-r border-white p-0" />
              <th scope="row" className={`border-t border-l border-[#cbdef7] bg-white p-0 text-left font-normal whitespace-nowrap ${group.inset ? "pl-[5px]" : "pl-[2px]"}`}>
                {name}
              </th>
              <td className="border-x border-t border-[#cbdef7] bg-white p-0 pl-[2px]">{value}</td>
            </tr>
          ))}
        </tbody>
      ))}
    </table>
  );
}

function RightDock() {
  return (
    <div className="flex w-[400px] shrink-0 flex-col">
      <section className="border border-[#6f9ad3] bg-[#e8effb] pb-px">
        <PanelTitle
          text="Viewport"
          action="Fechar Viewport"
          icon={
            <Icon>
              <path d="m4.500 4.500 7 7M11.500 4.500l-7 7" stroke="#1c3f7c" strokeWidth="1.700" />
            </Icon>
          }
        />
        <div className="mt-px border border-[#646464] bg-white">
          <div role="toolbar" aria-label="Viewport" className={`${bar} h-[25px] border-r border-[#c4c4c4] pb-[2px]`}>
            <Tool label="Selecionar" icon={<Cursor />} active />
            <Tool label="Mover vista" icon={<Hand />} />
            <Tool label="Zoom" icon={<Zoom />} />
            <Tool label="Zoom janela" icon={<ZoomWindow />} />
            <Tool label="Zoom extensão" icon={<ZoomFit />} />
            <Tool label="Orbitar" icon={<Orbit />} />
            <Sep />
            <Tool label="Modo de exibição" icon={<WireCube />} caret="tight" />
            <Sep />
          </div>
          <Preview />
        </div>
      </section>
      <div className="flex h-[5px] items-center justify-center bg-white">
        <Grip />
      </div>
      <section className="flex grow flex-col border border-b-0 border-[#6f9ad3] bg-[#e8effb]">
        <PanelTitle
          text="Edição"
          action="Fixar Edição"
          icon={
            <Icon>
              <path d="m8.500 2 5 5-2 .5-1.500 2-.5 2.500-5.500-5.500 2.500-.5 2-1.500z" fill="#1c3f7c" />
              <path d="M6.500 9.500 3 13M12.500 2.500l1 1" stroke="#1c3f7c" strokeWidth="1.500" />
              <path d="m9 4.500 2 2" stroke="#b8d5fb" />
            </Icon>
          }
        />
        <div className="border-t border-[#6f9ad3]" />
        <div role="toolbar" aria-label="Edição" className={`${bar} mx-[5px] mt-[5px] h-[25px] rounded border-r border-[#c4c4c4]`}>
          <span className="ml-[2px] h-[15px] border-l-2 border-dotted border-[#b5b5b5]" />
          <span className="w-[5px]" />
          <Tool label="Adicionar padrão" icon={<PresetAdd />} />
          <Sep />
          <button type="button" className="flex items-center gap-[3px] pl-[3px] text-xs text-black">
            <Eyedrop />
            Aplicar em todos
          </button>
        </div>
        <div className="mx-[3px] mt-[7px] mb-[34px] grow border border-[#6f9ad3] bg-white px-[2px] pt-px">
          <div className="h-full bg-[#d3e5fb]">
            <PropertyGrid />
          </div>
        </div>
      </section>
    </div>
  );
}

/* ---------- shell ---------- */

function Tab({ text, grow, active }: { text: string; grow: string; active?: boolean }) {
  return (
    <button
      type="button"
      role="tab"
      aria-selected={!!active}
      className={`h-[22px] min-w-0 truncate rounded-t-[3px] border-t border-r border-b pl-[7px] text-left ${grow} ${
        active ? "border-x-[#c4c4c4] border-t-[#c4c4c4] border-b-[#dedede] bg-white" : "border-[#c4c4c4] bg-linear-to-b from-[#ececec] to-[#dfdfdf]"
      }`}
    >
      {text}
    </button>
  );
}

export default function App() {
  return (
    <div className="flex min-h-screen flex-col bg-white pt-2 pr-3 pb-[18px] pl-2 font-['Open_Sans',sans-serif] text-xs text-black">
      <div className="flex grow flex-col border border-[#808080]">
        <header className="ml-[3px] flex h-[21px] items-center bg-linear-to-r from-[#f8f0ee] from-60% via-[#faf3e0] via-75% to-[#f4f1ed] pb-[2px]">
          <Module />
          <h1 className="ml-1 grow truncate font-['Roboto',sans-serif] text-xs text-black">
            Editor de Módulos - Studio_Modulacao_k1\System\Idélli\Montagem K1\Cozinha K1\Componentes\Prateleiras\Movel Canto L (Cópia) (Cópia)
          </h1>
          <div className="flex gap-[30px] pr-[18px]">
            <button type="button" aria-label="Minimizar">
              <Icon>
                <path d="M3 8.500h10" stroke="#111" />
              </Icon>
            </button>
            <button type="button" aria-label="Restaurar">
              <Icon>
                <path d="M3.500 5.500h7v7h-7z" stroke="#111" />
                <path d="M5.500 5.500v-2h6.300c.5 0 .7.200.7.700v6.300h-2" stroke="#111" />
              </Icon>
            </button>
            <button type="button" aria-label="Fechar">
              <Icon>
                <path d="m3 3 10 10M13 3 3 13" stroke="#111" />
              </Icon>
            </button>
          </div>
        </header>

        <div className="mt-[5px] mr-[6px] ml-[5px] flex h-[34px] items-center justify-end bg-[#0078d7] pt-[5px] pr-[23px]">
          <button type="button" className="mr-4 flex items-center gap-2 font-['Roboto',sans-serif] text-xs text-white">
            DEFAULT
            <Caret />
          </button>
          <span className="h-5 w-px bg-[#cfe4f8]" />
          <button type="button" aria-label="Atualizar" className="ml-[10px]">
            <Refresh />
          </button>
          <span className="ml-2 h-5 w-px bg-[#cfe4f8]" />
          <button type="button" aria-label="Propriedades" aria-pressed="true" className="ml-[7px] flex size-5 items-center justify-center bg-[#b8c4d0]">
            <Form />
          </button>
          <button type="button" aria-label="Configurações" className="ml-[7px]">
            <Gears />
          </button>
          <span className="ml-[10px] h-5 w-px bg-[#cfe4f8]" />
          <button type="button" aria-label="Ajuda" className="ml-[10px]">
            <Help />
          </button>
        </div>

        <div className="mt-px mr-[6px] mb-1 ml-[3px] flex grow">
          <Sidebar />
          <div className="flex w-[13px] shrink-0 flex-col items-center">
            <button type="button" aria-label="Recolher árvore" className="flex">
              <svg viewBox="0 0 8 8" className="size-2" aria-hidden="true">
                <path d="M8 0v8L0 4z" fill="#000" />
              </svg>
            </button>
            <button type="button" aria-label="Expandir árvore" className="mt-px flex">
              <svg viewBox="0 0 8 8" className="size-2" aria-hidden="true">
                <path d="M0 0v8l8-4z" fill="#000" />
              </svg>
            </button>
          </div>
          <main className="flex min-w-0 grow flex-col border-b border-l border-[#c4c4c4]">
            <div role="tablist" className="flex font-['Liberation_Sans',sans-serif] text-[11px]">
              <Tab text="Principal" grow="flex-[268]" />
              <Tab text="Agregados" grow="flex-[280]" />
              <Tab text="Desenho" grow="flex-[270]" />
              <Tab text="Redimensionamento" grow="flex-[151]" />
              <Tab text="Observações" grow="flex-[260]" />
              <Tab text="Builder" grow="flex-[259]" active />
            </div>
            <div className="flex grow flex-col border-r border-[#c4c4c4] px-[5px] pt-[5px] pb-[5px]">
              <MainToolbar />
              <div className="flex grow bg-linear-to-b from-[#bcd9ff] to-[#6f9ad3] pt-[5px] pr-[5px] pb-[6px] pl-[5px]">
                <section className="flex min-w-0 grow border-t border-l border-white">
                  <div className="flex min-w-0 grow border border-b-0 border-[#6f9ad3] bg-[#e8effb] px-1 pt-1 pb-[5px]">
                    <div className="min-w-0 grow border border-[#646464] bg-white">
                      <Drawing />
                    </div>
                  </div>
                </section>
                <div className="flex w-[5px] shrink-0 items-center justify-center border-l border-[#d3e4fb] bg-white">
                  <Grip vertical />
                </div>
                <RightDock />
              </div>
            </div>
          </main>
        </div>
      </div>
    </div>
  );
}
